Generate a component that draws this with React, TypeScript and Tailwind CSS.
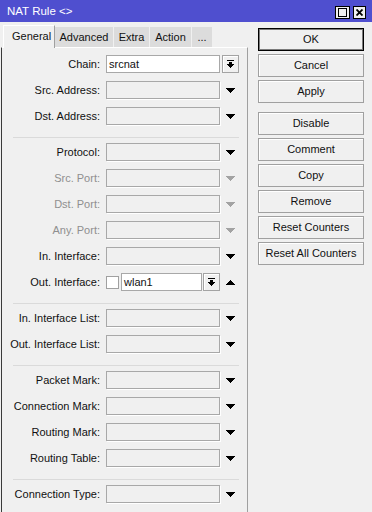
const Tri = ({ up = false, dim = false }: { up?: boolean; dim?: boolean }) => (
  <svg width="9" height="5" viewBox="0 0 9 5" shapeRendering="crispEdges">
    <path
      d={
        up
          ? "M4 0H5V1H6V2H7V3H8V4H9V5H0V4H1V3H2V2H3V1H4Z"
          : "M0 0H9V1H8V2H7V3H6V4H5V5H4V4H3V3H2V2H1V1H0Z"
      }
      fill={dim ? "#a3a3a3" : "#000"}
    />
  </svg>
);

const DropBtn = () => (
  <div className="w-[17px] h-[18px] border border-[#a3a3a3] bg-[#f0f0f0] flex items-center justify-center shadow-[inset_1px_1px_0_#fff]">
    <svg width="7" height="8" viewBox="0 0 7 8" shapeRendering="crispEdges">
      <path d="M0 0H7V1H0Z M2 2H5V4H7V5H6V6H5V7H4V8H3V7H2V6H1V5H0V4H2Z" fill="#000" />
    </svg>
  </div>
);

const Box = () => (
  <div className="w-[114px] h-[18px] border border-[#a8a8a8] bg-[#f0f0f0] shadow-[1px_1px_0_#fff]" />
);

const Row = ({
  label,
  dim = false,
  children,
}: {
  label: string;
  dim?: boolean;
  children?: React.ReactNode;
}) => (
  <div className="flex items-center h-[18px] mb-[8px] shrink-0">
    <div className={`w-[98px] text-right whitespace-nowrap ${dim ? "text-[#8f8f8f]" : "text-[#111]"}`}>
      {label}
    </div>
    <div className="ml-[6px] flex items-center">
      {children ?? (
        <>
          <Box />
          <div className="ml-[6px] flex">
            <Tri dim={dim} />
          </div>
        </>
      )}
    </div>
  </div>
);

const Sep = () => <div className="h-px shrink-0 bg-[#dadada] ml-[11px] w-[226px] mt-[4px] mb-[5px]" />;

const Btn = ({ label, primary = false, last = false, gap = false }: { label: string; primary?: boolean; last?: boolean; gap?: boolean }) => (
  <div
    className={`h-[23px] flex items-center justify-center bg-[#f0f0f0] text-[#111] ${
      primary
        ? "border border-black shadow-[inset_0_0_0_1px_#7a7a7a]"
        : "border border-[#a0a0a0] shadow-[inset_1px_1px_0_#fff]"
    } ${gap ? "mb-[9px]" : last ? "" : "mb-[3px]"}`}
  >
    {label}
  </div>
);

export default function App() {
  return (
    <div
      className="w-[372px] h-[512px] bg-[#f0f0f0] flex flex-col overflow-hidden text-[11px]"
      style={{ fontFamily: '"Liberation Sans", Arial, sans-serif' }}
    >
      {/* title bar */}
      <div className="h-[22px] bg-[#4f4fcf] flex items-center justify-between pl-[7px] pr-[6px] shrink-0">
        <span className="text-white text-[11.5px] pt-[2px]">NAT Rule &lt;&gt;</span>
        <div className="flex gap-[3px] pt-[2px]">
          <div className="w-[15px] h-[13px] bg-[#f0f0f0] border border-black flex items-center justify-center">
            <div className="w-[9px] h-[9px] border border-black" />
          </div>
          <div className="w-[13px] h-[13px] bg-[#f0f0f0] border border-black flex items-center justify-center">
            <svg width="7" height="7" viewBox="0 0 7 7">
              <path d="M0.5 0.5L6.5 6.5M6.5 0.5L0.5 6.5" stroke="#000" strokeWidth="1.8" />
            </svg>
          </div>
        </div>
      </div>

      <div className="flex flex-1 min-h-0">
        {/* left: tabs + panel */}
        <div className="ml-px w-[247px] flex flex-col">
          <div className="h-[25px] flex items-end pl-[2px] shrink-0">
            <div className="h-[23px] w-[52px] bg-[#f0f0f0] border-t border-l border-white border-r-[#a0a0a0] border-r flex items-center pl-[8px] pb-[1px] text-[#111] -mb-px relative z-10">
              General
            </div>
            <div className="h-[20px] w-[59px] bg-[#dcdcdc] border-r border-[#f0f0f0] flex items-center justify-center text-[#111]">
              Advanced
            </div>
            <div className="h-[20px] w-[36px] bg-[#dcdcdc] border-r border-[#f0f0f0] flex items-center justify-center text-[#111]">
              Extra
            </div>
            <div className="h-[20px] w-[42px] bg-[#dcdcdc] border-r border-[#f0f0f0] flex items-center justify-center text-[#111]">
              Action
            </div>
            <div className="h-[20px] w-[20px] bg-[#dcdcdc] flex items-center justify-center text-[#111]">
              ...
            </div>
          </div>
          <div className="flex-1 flex flex-col border-l border-l-[#3a3a3a] border-t border-t-white border-r border-r-[#a0a0a0] pt-[7px]">
            <Row label="Chain:">
              <div className="w-[114px] h-[18px] border border-[#a8a8a8] bg-white flex items-center pl-[2px] text-[#111]">
                srcnat
              </div>
              <div className="ml-[2px]">
                <DropBtn />
              </div>
            </Row>
            <Row label="Src. Address:" />
            <Row label="Dst. Address:" />
            <Sep />
            <Row label="Protocol:" />
            <Row label="Src. Port:" dim />
            <Row label="Dst. Port:" dim />
            <Row label="Any. Port:" dim />
            <Row label="In. Interface:" />
            <Row label="Out. Interface:">
              <div className="w-[13px] h-[13px] border border-[#a0a0a0] bg-white" />
              <div className="ml-[2px] w-[81px] h-[18px] border border-[#a8a8a8] bg-white flex items-center pl-[2px] text-[#111]">
                wlan1
              </div>
              <div className="ml-px">
                <DropBtn />
              </div>
              <div className="ml-[6px] flex">
                <Tri up />
              </div>
            </Row>
            <Sep />
            <Row label="In. Interface List:" />
            <Row label="Out. Interface List:" />
            <Sep />
            <Row label="Packet Mark:" />
            <Row label="Connection Mark:" />
            <Row label="Routing Mark:" />
            <Row label="Routing Table:" />
            <Sep />
            <Row label="Connection Type:" />
          </div>
        </div>

        {/* right: buttons */}
        <div className="ml-[10px] w-[106px] pt-[6px] flex flex-col">
          <Btn label="OK" primary />
          <Btn label="Cancel" />
          <Btn label="Apply" gap />
          <Btn label="Disable" />
          <Btn label="Comment" />
          <Btn label="Copy" />
          <Btn label="Remove" />
          <Btn label="Reset Counters" />
          <Btn label="Reset All Counters" last />
        </div>
      </div>
    </div>
  );
}
